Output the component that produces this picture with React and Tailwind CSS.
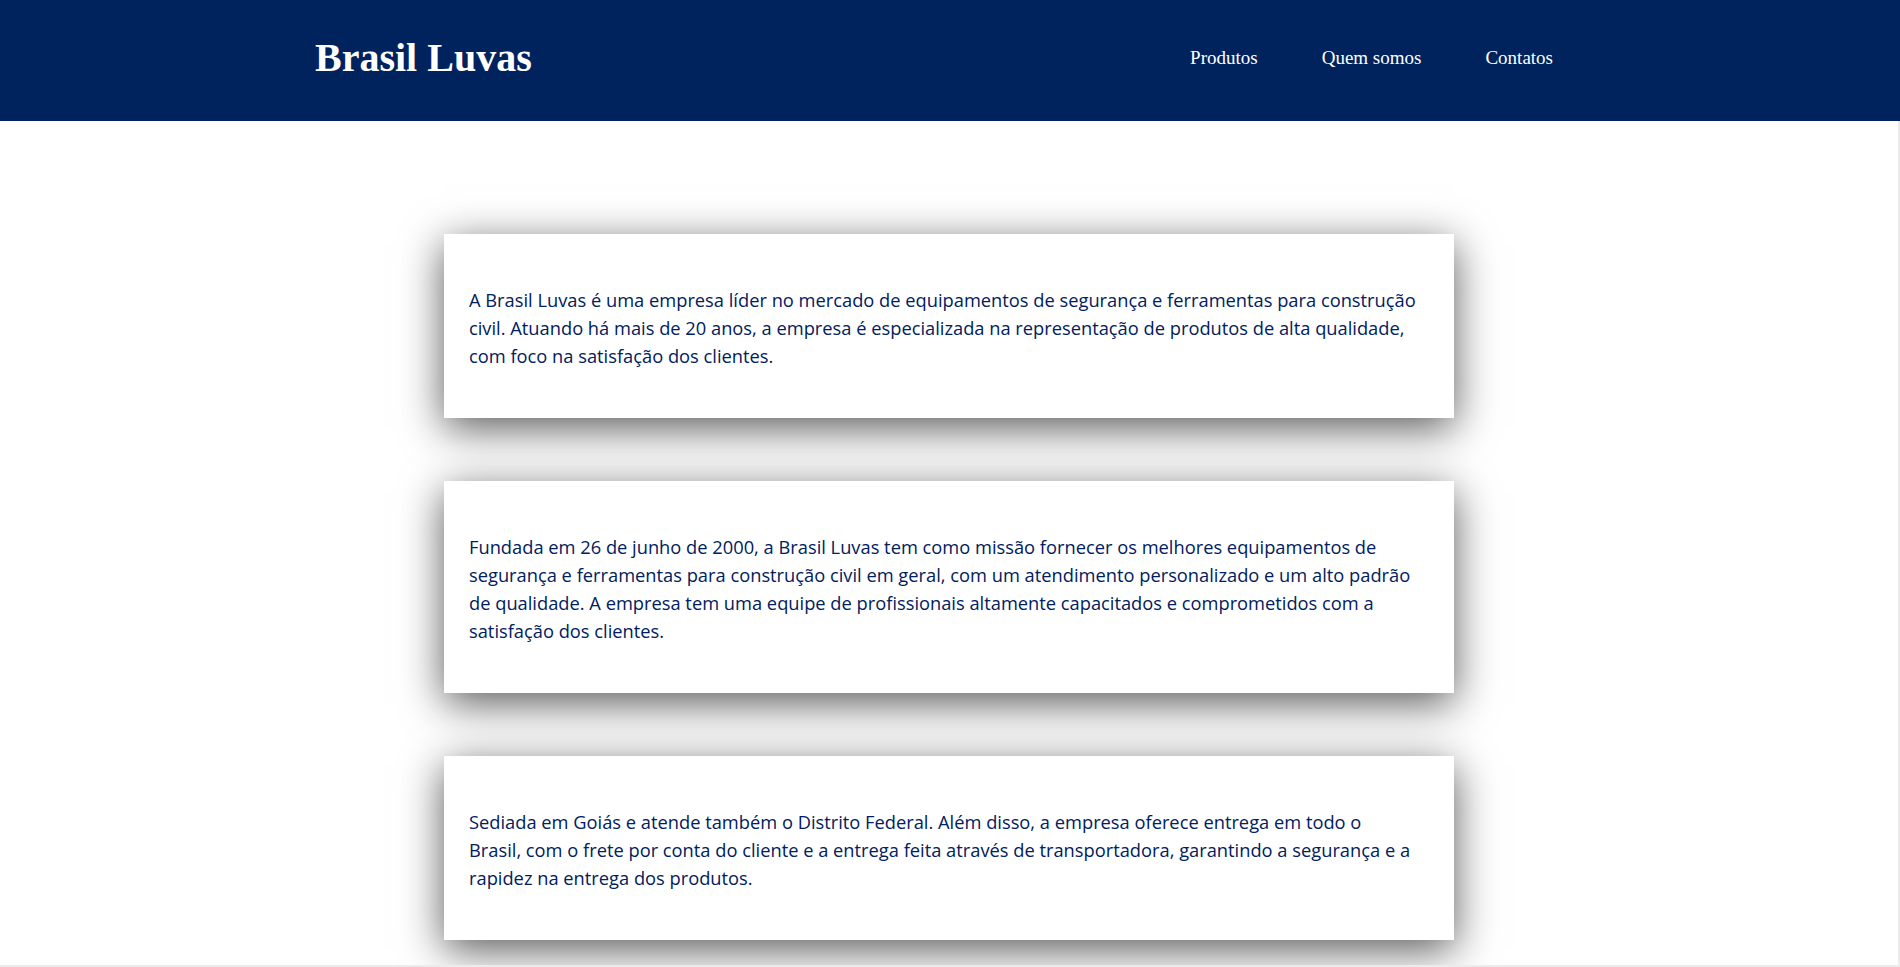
import React from 'react';

// each card is kept as its lines, so the breaks follow the original layout
const paragraphs = [
  [
    'A Brasil Luvas é uma empresa líder no mercado de equipamentos de segurança e ferramentas para construção',
    'civil. Atuando há mais de 20 anos, a empresa é especializada na representação de produtos de alta qualidade,',
    'com foco na satisfação dos clientes.',
  ],
  [
    'Fundada em 26 de junho de 2000, a Brasil Luvas tem como missão fornecer os melhores equipamentos de',
    'segurança e ferramentas para construção civil em geral, com um atendimento personalizado e um alto padrão',
    'de qualidade. A empresa tem uma equipe de profissionais altamente capacitados e comprometidos com a',
    'satisfação dos clientes.',
  ],
  [
    'Sediada em Goiás e atende também o Distrito Federal. Além disso, a empresa oferece entrega em todo o',
    'Brasil, com o frete por conta do cliente e a entrega feita através de transportadora, garantindo a segurança e a',
    'rapidez na entrega dos produtos.',
  ],
];

const Header = () => (
  <header className="h-[121px] shrink-0 bg-[#00235e] flex items-center justify-between pl-[315px] pr-[347px] pb-[5px] font-['Liberation_Serif',serif] text-white">
    <h1 className="text-[40px] font-bold leading-none">Brasil Luvas</h1>
    <nav className="flex gap-[64px] text-[19px]">
      <a href="#produtos">Produtos</a>
      <a href="#quem-somos">Quem somos</a>
      <a href="#contatos">Contatos</a>
    </nav>
  </header>
);

export default function App() {
  return (
    <div className="h-screen overflow-hidden flex flex-col bg-white">
      <Header />
      <div className="flex-1 flex min-h-0">
        {/* Content */}
        <main className="flex-1 flex flex-col items-center gap-[63px] pt-[113px]">
          {paragraphs.map((lines, i) => (
            <section key={i} className="w-[1010px] bg-white pl-[25px] pr-[15px] pt-[52px] pb-[48px] shadow-[0_10px_40px_rgba(0,0,0,0.65)]">
              <p className="font-['Open_Sans',sans-serif] text-[18.3px] leading-[28px] text-[#00205e]">
                {lines.map((line, j) => (
                  <React.Fragment key={j}>
                    {line}
                    {j < lines.length - 1 && <br />}
                  </React.Fragment>
                ))}
              </p>
            </section>
          ))}
        </main>
        <div className="w-[2px] bg-[#ececec]" />
      </div>
      <div className="h-[2px] shrink-0 bg-[#ececec]" />
    </div>
  );
}
